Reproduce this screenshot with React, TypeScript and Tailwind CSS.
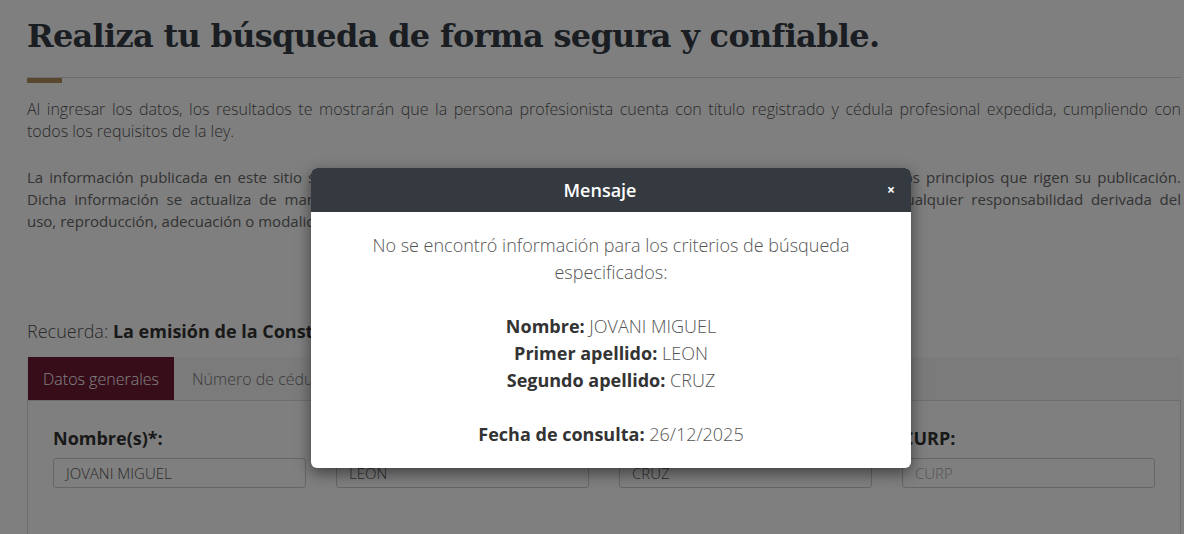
import React from 'react';

// 模态框中显示的查询条件
const criterios = [
  { label: 'Nombre:', value: 'JOVANI MIGUEL' },
  { label: 'Primer apellido:', value: 'LEON' },
  { label: 'Segundo apellido:', value: 'CRUZ' },
];

// 表单字段
const campos = [
  { label: 'Nombre(s)*:', value: 'JOVANI MIGUEL', placeholder: '' },
  { label: 'Primer apellido*:', value: 'LEON', placeholder: '' },
  { label: 'Segundo apellido:', value: 'CRUZ', placeholder: '' },
  { label: 'CURP:', value: '', placeholder: 'CURP' },
];

const App: React.FC = () => {
  return (
    <div className="relative h-[534px] w-[1184px] overflow-hidden bg-white font-['Open_Sans',sans-serif] text-[#545454]">
      {/* 页面主体 */}
      <div className="ml-[27px] w-[1154px] pt-[12px]">
        <h1 className="font-['DejaVu_Serif',serif] text-[32px] font-bold leading-[48px] tracking-[-0.7px] text-[#353c44]">
          Realiza tu búsqueda de forma segura y confiable.
        </h1>
        <div className="mt-[17px] h-px w-full bg-[#dadada]" />
        <div className="h-[5px] w-[35px] bg-[#b38e5d]" />

        <div className="mt-[15px] text-[16px] font-light leading-[22px]">
          <p className="text-justify [text-align-last:justify]">
            Al ingresar los datos, los resultados te mostrarán que la persona profesionista cuenta con título registrado y cédula profesional expedida, cumpliendo con
          </p>
          <p>todos los requisitos de la ley.</p>
        </div>

        <div className="mt-[24px] text-[15px] leading-[22px] text-[#666]">
          <p className="text-justify [text-align-last:justify]">
            La información publicada en este sitio se encuentra apegada a la normatividad vigente en materia de transparencia y a los principios que rigen su publicación.
          </p>
          <p className="text-justify [text-align-last:justify]">
            Dicha información se actualiza de manera periódica, por lo que la Dirección General de Profesiones se deslinda de cualquier responsabilidad derivada del
          </p>
          <p>uso, reproducción, adecuación o modalidad que terceros realicen de la misma.</p>
        </div>

        <p className="mt-[88px] text-[18px] font-light leading-[22px] text-[#545454]">
          Recuerda: <span className="font-bold text-[#333]">La emisión de la Constancia no implica validez oficial alguna.</span>
        </p>

        {/* 选项卡 */}
        <div className="mt-[15px] flex h-[43px] bg-[#f6f6f6]">
          <div className="ml-px flex items-center bg-[#6f1a33] px-[15px] text-[16px] font-light text-white">Datos generales</div>
          <div className="flex items-center px-[18px] text-[16px] font-light text-[#777]">Número de cédula profesional</div>
        </div>

        {/* 表单面板 */}
        <div className="h-[200px] border border-[#dddddd] px-[25px] pt-[24px]">
          <div className="grid grid-cols-4 gap-x-[30px]">
            {campos.map((c) => (
              <div key={c.label} className="flex flex-col">
                <label className="text-[18px] font-bold leading-[26px] text-[#333]">{c.label}</label>
                <div className="mt-[7px] flex h-[30px] items-center rounded-[3px] border border-[#cccccc] px-[12px] text-[15px] font-light">
                  {c.value ? (
                    <span className="text-[#555]">{c.value}</span>
                  ) : (
                    <span className="text-[#aaa]">{c.placeholder}</span>
                  )}
                </div>
              </div>
            ))}
          </div>
        </div>
      </div>

      {/* 遮罩层 */}
      <div className="absolute inset-0 bg-black/50" />

      {/* 消息对话框 */}
      <div className="absolute left-[311px] top-[168px] w-[600px] overflow-hidden rounded-[6px] bg-white shadow-[0_5px_15px_rgba(0,0,0,0.5)]">
        <div className="flex h-[44px] items-center bg-[#343a40] px-4">
          <div className="flex-1 text-center text-[18px] font-semibold text-white">Mensaje</div>
          <button className="w-[22px] text-right text-[14px] font-bold leading-none text-white">×</button>
        </div>
        <div className="px-4 pb-[20px] pt-[20px] text-center text-[18px] font-light leading-[27px] text-[#555]">
          <p>No se encontró información para los criterios de búsqueda especificados:</p>
          <div className="h-[27px]" />
          {criterios.map((c) => (
            <p key={c.label}>
              <span className="font-bold text-[#333]">{c.label}</span> {c.value}
            </p>
          ))}
          <div className="h-[27px]" />
          <p>
            <span className="font-bold text-[#333]">Fecha de consulta:</span> 26/12/2025
          </p>
        </div>
      </div>
    </div>
  );
};

export default App;
